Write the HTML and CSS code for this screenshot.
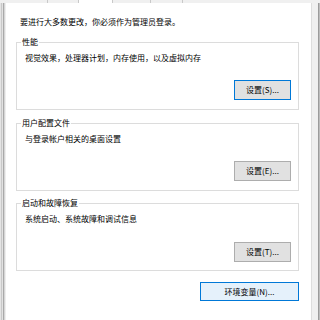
FILE: index.html
```html
<!DOCTYPE html>
<html lang="zh-CN">
<head>
<meta charset="utf-8">
<link rel="stylesheet" href="styles.css">
</head>
<body>
<div class="window">
  <div class="tabs">
    <span class="tab t1"></span>
    <span class="tab t2"></span>
    <span class="tab sel"></span>
    <span class="tab t4"></span>
    <span class="tab t5"></span>
    <span class="tab rest"></span>
  </div>
  <div class="main">
    <div class="lstrip"></div>
    <div class="panel">
      <div class="intro">要进行大多数更改，你必须作为管理员登录。</div>
      <fieldset class="group">
        <legend>性能</legend>
        <div class="desc">视觉效果，处理器计划，内存使用，以及虚拟内存</div>
        <div class="actions"><button class="btn default">设置(S)...</button></div>
      </fieldset>
      <fieldset class="group">
        <legend>用户配置文件</legend>
        <div class="desc">与登录帐户相关的桌面设置</div>
        <div class="actions"><button class="btn">设置(E)...</button></div>
      </fieldset>
      <fieldset class="group last">
        <legend>启动和故障恢复</legend>
        <div class="desc">系统启动、系统故障和调试信息</div>
        <div class="actions"><button class="btn">设置(T)...</button></div>
      </fieldset>
      <div class="footer"><button class="btn env">环境变量(N)...</button></div>
    </div>
    <div class="rstrip"></div>
  </div>
</div>
</body>
</html>
```

FILE: styles.css
```css
* { box-sizing: border-box; }
html, body { margin: 0; padding: 0; background: #f0f0f0; }
body {
  width: 320px;
  height: 320px;
  overflow: hidden;
  font-family: "Noto Sans CJK SC", "Noto Sans", sans-serif;
  font-size: 8px;
  color: #000;
}
.window { width: 320px; height: 320px; display: flex; flex-direction: column; }
.tabs { height: 3px; display: flex; background: #f0f0f0; }
.tab { height: 3px; border-right: 1px solid #c9c9c9; background: #f0f0f0; }
.t1 { width: 48px; }
.t2 { width: 31px; }
.sel { width: 34px; background: #fff; }
.t4 { width: 38px; }
.t5 { width: 32px; }
.rest { flex: 1; border-right: 0; }
.main { flex: 1; display: flex; }
.lstrip {
  width: 6px;
  background: linear-gradient(to right,
    #e4e4e4 0 1px, #c9c9c9 1px 2px, #e2e2e2 2px 3px,
    #a9a9a9 3px 4px, #d6d6d6 4px 5px, #eeeeee 5px 6px);
}
.panel {
  width: 306px;
  background: #fff;
  border-right: 1px solid #dedede;
  padding: 13px 13px 0 10px;
}
.rstrip {
  width: 8px;
  background: linear-gradient(to right, #f0f0f0 0 6px, #9c9c9c 6px 7px, #bdbdbd 7px 8px);
}
.intro { line-height: 12px; padding-left: 4px; }
.group {
  margin: 8px 0 0 0;
  min-width: 0;
  width: 283px;
  border: 1px solid #dcdcdc;
  padding: 0 7px 9px 4px;
}
.intro + .group { margin-top: 9px; }
.group.last { margin-top: 7px; padding-bottom: 8px; }
.group legend {
  padding: 0 1px;
  line-height: 10px;
  font-size: 8px;
}
.desc { line-height: 10px; margin-top: 6px; padding-left: 4px; }
.actions { display: flex; justify-content: flex-end; margin-top: 17px; }
.last .actions { margin-top: 18px; }
.btn {
  font-family: inherit;
  font-size: 8px;
  color: #000;
  width: 57px;
  height: 20px;
  line-height: 18px;
  padding: 0;
  margin: 0;
  background: #e1e1e1;
  border: 1px solid #adadad;
  border-radius: 0;
}
.btn.default { border-color: #0078d7; }
.footer { display: flex; justify-content: flex-end; margin-top: 11px; width: 283px; }
.btn.env {
  width: 99px;
  height: 19px;
  line-height: 17px;
  background: #e5f1fb;
  border-color: #0078d7;
}
```
